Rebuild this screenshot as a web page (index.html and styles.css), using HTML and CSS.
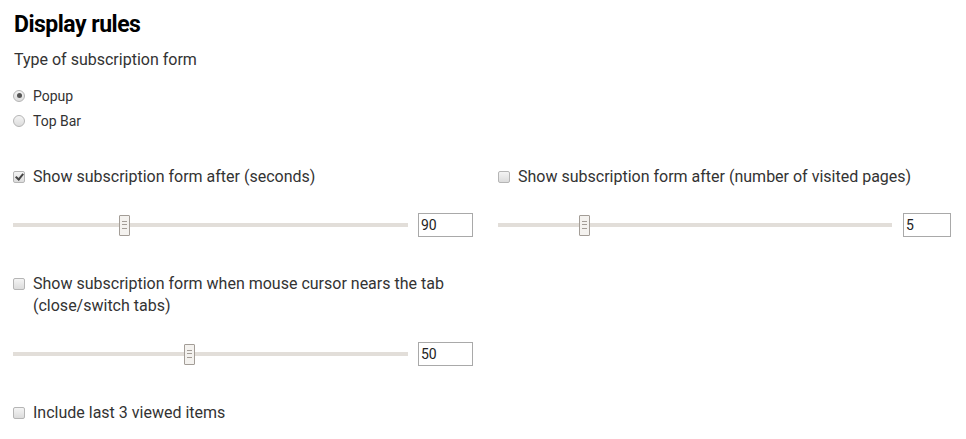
FILE: index.html
```html
<!DOCTYPE html>
<html lang="en">
<head>
  <meta charset="UTF-8" />
  <title>Display rules</title>
  <link rel="stylesheet" href="styles.css">
</head>
<body>
  <h1 class="title">Display rules</h1>
  <p class="subtitle">Type of subscription form</p>

  <div class="radios">
    <label class="radio-row"><input type="radio" name="formType" checked /> Popup</label>
    <label class="radio-row"><input type="radio" name="formType" /> Top Bar</label>
  </div>

  <div class="rules">
    <div class="rule">
      <label class="check-row"><input type="checkbox" checked /> Show subscription form after (seconds)</label>
      <div class="slider-row">
        <input type="range" class="slider" min="0" max="325" value="90" />
        <input type="text" class="num" value="90" />
      </div>
    </div>

    <div class="rule">
      <label class="check-row"><input type="checkbox" /> Show subscription form after (number of visited pages)</label>
      <div class="slider-row">
        <input type="range" class="slider" min="1" max="20" value="5" />
        <input type="text" class="num num-short" value="5" />
      </div>
    </div>

    <div class="rule">
      <label class="check-row"><input type="checkbox" /> <span>Show subscription form when mouse cursor nears the tab (close/switch tabs)</span></label>
      <div class="slider-row">
        <input type="range" class="slider" min="0" max="112" value="50" />
        <input type="text" class="num" value="50" />
      </div>
    </div>

    <div class="rule rule-full">
      <label class="check-row"><input type="checkbox" /> Include last 3 viewed items</label>
    </div>
  </div>
</body>
</html>
```

FILE: styles.css
```css
* {
  box-sizing: border-box;
}
body {
  margin: 0;
  padding: 0 13px;
  background: #fff;
  font-family: Roboto, 'Liberation Sans', sans-serif;
  color: #333;
}
.title {
  margin: 11px 0 0 1px;
  font-size: 23px;
  line-height: 28px;
  font-weight: 700;
  color: #000;
  letter-spacing: -0.5px;
}
.subtitle {
  margin: 11px 0 0 1px;
  font-size: 16px;
  line-height: 20px;
}
.radios {
  margin-top: 13px;
}
.radio-row {
  display: flex;
  align-items: center;
  height: 25px;
  font-size: 14px;
}
.radio-row input {
  -webkit-appearance: none;
  appearance: none;
  width: 12px;
  height: 12px;
  margin: 0 8px 0 0;
  border: 1px solid #b5b5b5;
  border-radius: 50%;
  background: linear-gradient(#f4f4f4, #dcdcdc);
  position: relative;
}
.radio-row input:checked::after {
  content: '';
  position: absolute;
  left: 2.5px;
  top: 2.5px;
  width: 5px;
  height: 5px;
  border-radius: 50%;
  background: #555;
}
.rules {
  margin-top: 33px;
  display: grid;
  grid-template-columns: 460px 453px;
  column-gap: 25px;
  row-gap: 36px;
}
.rule-full {
  grid-column: 1 / 2;
}
.check-row {
  display: flex;
  align-items: flex-start;
  font-size: 16px;
  line-height: 22px;
}
.check-row input {
  -webkit-appearance: none;
  appearance: none;
  flex: none;
  width: 12px;
  height: 12px;
  margin: 5px 8px 0 0;
  border: 1px solid #b5b5b5;
  border-radius: 2px;
  background: linear-gradient(#f4f4f4, #dcdcdc);
  position: relative;
}
.check-row input:checked::after {
  content: '';
  position: absolute;
  left: 3px;
  top: 0px;
  width: 3px;
  height: 6px;
  border: solid #444;
  border-width: 0 2px 2px 0;
  transform: rotate(40deg);
}
.slider-row {
  display: flex;
  align-items: center;
  margin-top: 25px;
  height: 24px;
}
.slider {
  -webkit-appearance: none;
  appearance: none;
  flex: 1;
  height: 24px;
  margin: 0 10px 0 0;
  background: transparent;
}
.slider::-webkit-slider-runnable-track {
  height: 4px;
  background: #e2ded9;
}
.slider::-webkit-slider-thumb {
  -webkit-appearance: none;
  width: 11px;
  height: 21px;
  margin-top: -8px;
  border: 1px solid #a39d97;
  border-radius: 1px;
  background:
    linear-gradient(#a39d97, #a39d97) center 5px / 5px 1px no-repeat,
    linear-gradient(#a39d97, #a39d97) center 8px / 5px 1px no-repeat,
    linear-gradient(#a39d97, #a39d97) center 12px / 5px 1px no-repeat,
    #f4f2ef;
}
.num {
  width: 55px;
  height: 24px;
  padding: 0 2px;
  border: 1px solid #a9a9a9;
  font-family: Roboto, 'Liberation Sans', sans-serif;
  font-size: 14px;
  color: #222;
}
.num-short {
  width: 48px;
  margin-left: 1px;
}
```
